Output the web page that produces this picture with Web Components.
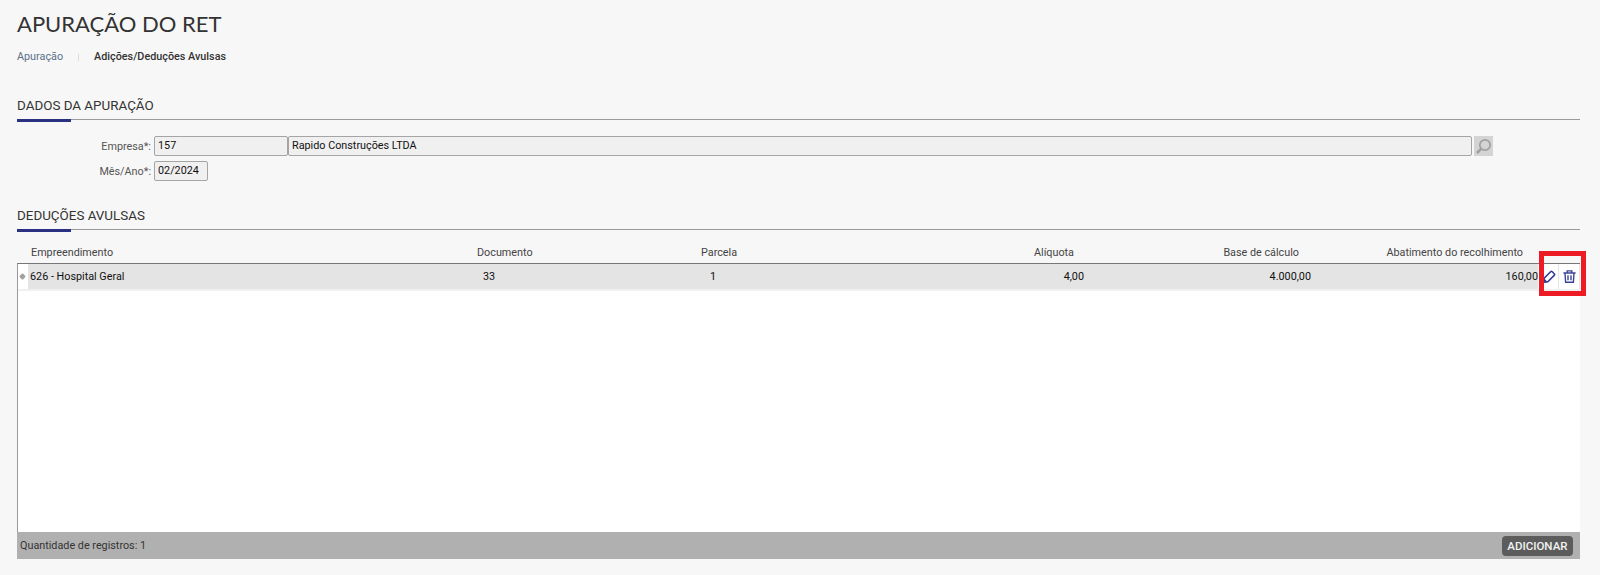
<!DOCTYPE html>
<html lang="pt-BR">
<head>
<meta charset="utf-8">
<title>Apuração do RET</title>
<style>
  html, body { margin: 0; height: 100%; }
  body { background: #f7f7f7; font-family: Roboto, "Liberation Sans", sans-serif; overflow: hidden; }
</style>
</head>
<body>
<ret-page>
  <page-head slot="head" title="APURAÇÃO DO RET" parent="Apuração" current="Adições/Deduções Avulsas"></page-head>

  <section-title style="margin-top:26px">DADOS DA APURAÇÃO</section-title>
  <div style="height:16px"></div>
  <form-row label="Empresa*:">
    <text-box style="width:134px" value="157"></text-box>
    <text-box style="width:1184px" value="Rapido Construções LTDA"></text-box>
    <search-button></search-button>
  </form-row>
  <div style="height:5px"></div>
  <form-row label="Mês/Ano*:">
    <text-box style="width:54px" value="02/2024"></text-box>
  </form-row>

  <section-title style="margin-top:19px">DEDUÇÕES AVULSAS</section-title>
  <data-grid></data-grid>
</ret-page>

<script>
class RetPage extends HTMLElement {
    constructor() {
        super();
        this.attachShadow({ mode: 'open' });
        this.shadowRoot.innerHTML = `
      <style>
        :host { display: block; padding: 0 20px 0 17px; color: #333; }
      </style>
      <slot name="head"></slot>
      <slot></slot>
    `;
    }
}
customElements.define('ret-page', RetPage);

class PageHead extends HTMLElement {
    constructor() {
        super();
        this.attachShadow({ mode: 'open' });
    }

    connectedCallback() {
        this.shadowRoot.innerHTML = `
      <style>
        :host { display: block; padding-top: 10px; }
        h1 {
          margin: 0;
          font: 400 22px/28px Lato, "Open Sans", sans-serif;
          color: #333;
        }
        nav {
          display: flex;
          align-items: center;
          margin-top: 12px;
          font-size: 10.8px;
          line-height: 14px;
        }
        .parent { color: #5b7089; }
        .sep { width: 1px; height: 7px; background: #ddd; margin: 0 15px 0 15px; }
        .current { color: #333; font-weight: 500; }
      </style>
      <h1>${this.getAttribute('title')}</h1>
      <nav>
        <span class="parent">${this.getAttribute('parent')}</span>
        <span class="sep"></span>
        <span class="current">${this.getAttribute('current')}</span>
      </nav>
    `;
    }
}
customElements.define('page-head', PageHead);

class SectionTitle extends HTMLElement {
    constructor() {
        super();
        this.attachShadow({ mode: 'open' });
        this.shadowRoot.innerHTML = `
      <style>
        :host {
          display: block;
          position: relative;
          height: 30px;
          box-sizing: border-box;
          font-size: 13.4px;
          line-height: 16px;
          padding-top: 8px;
          color: #333;
          border-bottom: 1px solid #999;
        }
        .mark {
          position: absolute;
          left: 0;
          bottom: -3px;
          width: 54px;
          height: 3px;
          background: #2a3183;
        }
      </style>
      <slot></slot><span class="mark"></span>
    `;
    }
}
customElements.define('section-title', SectionTitle);

class FormRow extends HTMLElement {
    constructor() {
        super();
        this.attachShadow({ mode: 'open' });
    }

    connectedCallback() {
        this.shadowRoot.innerHTML = `
      <style>
        :host { display: flex; align-items: center; }
        label {
          width: 134px;
          margin-right: 3px;
          text-align: right;
          font-size: 10.8px;
          color: #555;
        }
        .controls { display: flex; align-items: center; }
      </style>
      <label>${this.getAttribute('label')}</label>
      <div class="controls"><slot></slot></div>
    `;
    }
}
customElements.define('form-row', FormRow);

class TextBox extends HTMLElement {
    constructor() {
        super();
        this.attachShadow({ mode: 'open' });
    }

    connectedCallback() {
        this.shadowRoot.innerHTML = `
      <style>
        :host {
          display: block;
          box-sizing: border-box;
          height: 20px;
          border: 1px solid #a5a5a5;
          border-radius: 2px;
          background: #f0f0f0;
          padding-left: 3px;
          font-size: 10.8px;
          line-height: 17px;
          color: #111;
        }
      </style>
      ${this.getAttribute('value')}
    `;
    }
}
customElements.define('text-box', TextBox);

class SearchButton extends HTMLElement {
    constructor() {
        super();
        this.attachShadow({ mode: 'open' });
        this.shadowRoot.innerHTML = `
      <style>
        :host {
          display: flex;
          align-items: center;
          justify-content: center;
          width: 19px;
          height: 20px;
          margin-left: 2px;
          background: #d4d4d4;
        }
      </style>
      <svg width="17" height="17" viewBox="0 0 17 17" fill="none" stroke="#a0a0a0">
        <circle cx="10" cy="7" r="5.2" stroke-width="1.7"/>
        <path d="M6.3 10.7L2 15" stroke-width="2.6"/>
      </svg>
    `;
    }
}
customElements.define('search-button', SearchButton);

const COLUMNS = '10px 444px 227px 158px 227px 227px 227px 21px 21px';

class DataGrid extends HTMLElement {
    constructor() {
        super();
        this.attachShadow({ mode: 'open' });
        this.shadowRoot.innerHTML = `
      <style>
        :host { display: block; position: relative; font-size: 10.8px; color: #333; }
        .head, .row { display: grid; grid-template-columns: ${COLUMNS}; }
        .head { height: 33px; align-items: end; padding: 0 0 4px 1px; box-sizing: border-box; color: #444; white-space: nowrap; }
        .body {
          height: 269px;
          box-sizing: border-box;
          background: #fff;
          border-top: 1px solid #777;
          border-left: 1px solid #999;
        }
        .row { height: 25px; align-items: center; border-bottom: 2px solid #f0f0f0; color: #111; }
        .row .c { height: 100%; display: flex; align-items: center; background: #e4e4e4; }
        .r { text-align: right; justify-content: flex-end; }
        .handle { display: flex; align-items: center; justify-content: center; height: 100%; padding-right: 2px; box-sizing: border-box; }
        .handle i { width: 5px; height: 5px; background: #a2a2a2; transform: rotate(45deg); border-radius: 1.5px; }
        .act { display: flex; align-items: center; justify-content: center; height: 100%; border-right: 1px solid #e6e6e6; box-sizing: border-box; }
        .act.edit { padding-left: 3px; }
        .foot {
          display: flex;
          align-items: center;
          justify-content: space-between;
          height: 27px;
          padding: 0 7px 0 3px;
          background: #b0b0b0;
          color: #333;
        }
        .add {
          height: 20px;
          padding: 0 5.5px;
          display: flex;
          align-items: center;
          border-radius: 4px;
          background: #5c5c5c;
          color: #f2f2f2;
          font-size: 11.5px;
          font-weight: 500;
        }
        .flag {
          position: absolute;
          left: 1522px;
          top: 21px;
          width: 47px;
          height: 45px;
          box-sizing: border-box;
          border: 5px solid #ed1c24;
        }
      </style>
      <div class="head">
        <span></span>
        <span style="padding-left:3px">Empreendimento</span>
        <span style="padding-left:5px">Documento</span>
        <span style="padding-left:2px">Parcela</span>
        <span class="r" style="padding-right:10px">Alíquota</span>
        <span class="r" style="padding-right:12px">Base de cálculo</span>
        <span class="r" style="padding-right:15px">Abatimento do recolhimento</span>
      </div>
      <div class="body">
        <div class="row">
          <span class="handle"><i></i></span>
          <span class="c" style="padding-left:2px">626 - Hospital Geral</span>
          <span class="c" style="padding-left:11px">33</span>
          <span class="c" style="padding-left:11px">1</span>
          <span class="c r">4,00</span>
          <span class="c r">4.000,00</span>
          <span class="c r">160,00</span>
          <span class="act edit">
            <svg width="13" height="13" viewBox="0 0 13 13" fill="none" stroke="#2f3a94" stroke-width="1.5">
              <path d="M.8 12.2L1.2 8.2L7.6 1.8Q8.4 1 9.3 1.8L11.4 3.9Q12 4.6 11.2 5.4L4.8 11.8Z"/>
              <path d="M1 9.8L3.4 12.2" stroke-width="2"/>
            </svg>
          </span>
          <span class="act">
            <svg width="13" height="13" viewBox="0 0 13 13" fill="none" stroke="#3a4596" stroke-width="1.4">
              <path d="M.4 3H12.6M4.2 3V.9H8.8V3"/>
              <path d="M2 3L2.6 12.3H10.4L11 3"/>
              <path d="M5 5.2V10.2M8 5.2V10.2"/>
            </svg>
          </span>
        </div>
      </div>
      <div class="foot">
        <span>Quantidade de registros: 1</span>
        <span class="add">ADICIONAR</span>
      </div>
      <div class="flag"></div>
    `;
    }
}
customElements.define('data-grid', DataGrid);
</script>
</body>
</html>
